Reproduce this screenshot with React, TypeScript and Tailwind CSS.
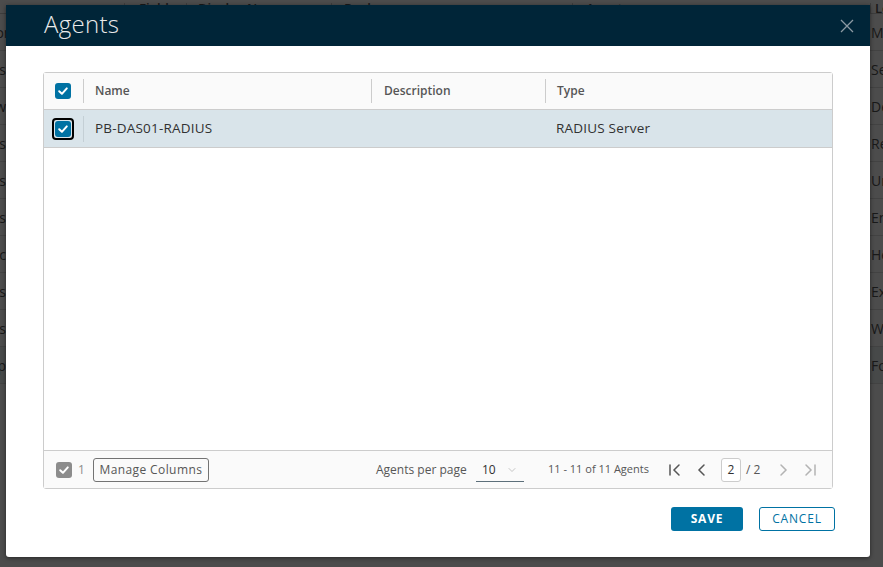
import { ChevronDown } from "lucide-react";

const font = { fontFamily: '"Open Sans", "Liberation Sans", sans-serif' };

const bgRows = [
  ["Permissions", "Manager"],
  ["Groups", "Server"],
  ["Review", "Default"],
  ["Users", "Realm"],
  ["Tokens", "Unix"],
  ["Policies", "Enrollment"],
  ["Logic", "Helpdesk"],
  ["Devices", "External"],
  ["Clients", "Web"],
  ["Map", "Forms"],
];

function Check({ className = "" }: { className?: string }) {
  return (
    <svg viewBox="0 0 16 16" className={className} fill="none">
      <path
        d="M4.2 8.3 L6.9 10.8 L11.8 5.4"
        stroke="white"
        strokeWidth="2"
        strokeLinecap="round"
        strokeLinejoin="round"
      />
    </svg>
  );
}

function Checkbox({ focused = false }: { focused?: boolean }) {
  const box = (
    <span className="flex h-4 w-4 items-center justify-center rounded-[3px] bg-[#0072a3]">
      <Check className="h-4 w-4" />
    </span>
  );
  if (!focused) return box;
  return (
    <span className="flex h-[22px] w-[22px] items-center justify-center rounded-[4px] border-2 border-black">
      {box}
    </span>
  );
}

// The dimmed page behind the dialog.
function BackgroundPage() {
  return (
    <div className="h-[567px] w-[883px] overflow-hidden bg-white text-[14px] text-[#565656]">
      <div className="flex h-[14px] items-end overflow-hidden border-b border-[#ccc] text-[13px] font-semibold leading-[10px] whitespace-nowrap">
        <div className="w-[124px] shrink-0" />
        <div className="w-[62px] shrink-0 border-l border-[#ccc] pl-[14px]">Field</div>
        <div className="w-[145px] shrink-0 border-l border-[#ccc] pl-[11px]">Display Name</div>
        <div className="w-[241px] shrink-0 border-l border-[#ccc] pl-[12px]">Realm</div>
        <div className="w-[298px] shrink-0 border-l border-[#ccc] pl-[13px]">Agents</div>
        <div className="shrink-0 border-l border-[#ccc] pl-[4px]">Location</div>
      </div>
      {bgRows.map(([left, right], i) => (
        <div
          key={left}
          className={`flex h-[37px] items-center border-b border-[#ddd] whitespace-nowrap ${i === 9 ? "bg-[#eef3f6]" : ""}`}
        >
          <div className="w-[870px] shrink-0 overflow-hidden">
            <span className="-ml-[60px] block w-[66px] text-right">{left}</span>
          </div>
          <div className="shrink-0 pl-[1px]">{right}</div>
        </div>
      ))}
    </div>
  );
}

function FirstIcon({ className = "" }: { className?: string }) {
  return (
    <svg viewBox="0 0 14 14" className={className} fill="none" stroke="currentColor" strokeWidth="1.5" strokeLinecap="round">
      <path d="M2 2 V12" />
      <path d="M11 2 L6 7 L11 12" />
    </svg>
  );
}

function LastIcon({ className = "" }: { className?: string }) {
  return (
    <svg viewBox="0 0 14 14" className={className} fill="none" stroke="currentColor" strokeWidth="1.5" strokeLinecap="round">
      <path d="M12 2 V12" />
      <path d="M3 2 L8 7 L3 12" />
    </svg>
  );
}

function PrevIcon({ className = "" }: { className?: string }) {
  return (
    <svg viewBox="0 0 14 14" className={className} fill="none" stroke="currentColor" strokeWidth="1.5" strokeLinecap="round">
      <path d="M9 2 L4 7 L9 12" />
    </svg>
  );
}

function NextIcon({ className = "" }: { className?: string }) {
  return (
    <svg viewBox="0 0 14 14" className={className} fill="none" stroke="currentColor" strokeWidth="1.5" strokeLinecap="round">
      <path d="M5 2 L10 7 L5 12" />
    </svg>
  );
}

function AgentsDialog() {
  return (
    <div className="absolute left-[6px] top-[5px] flex h-[552px] w-[864px] flex-col rounded-b-[3px] bg-white shadow-[0_1px_4px_rgba(0,0,0,0.5)]">
      <div className="flex h-[41px] items-center justify-between bg-[#002538] pl-[38px] pr-[15px]">
        <h3 className="pb-[4px] text-[24px] font-light tracking-[0.3px] text-[#eaeaea]">Agents</h3>
        <svg viewBox="0 0 16 16" className="h-[16px] w-[16px] text-[#8c9aa3]" fill="none" stroke="currentColor" strokeWidth="1.3">
          <path d="M2 2 L14 14 M14 2 L2 14" />
        </svg>
      </div>

      <div className="flex flex-1 flex-col px-[37px] pt-[26px]">
        {/* datagrid */}
        <div className="flex h-[417px] w-[790px] flex-col rounded-[3px] border border-[#ccc]">
          <div className="flex h-[37px] shrink-0 items-center border-b border-[#ccc] bg-[#fafafa] text-[12px] font-semibold text-[#565656]">
            <div className="flex w-[39px] items-center pl-[11px]">
              <Checkbox />
            </div>
            <div className="flex h-[24px] w-[288px] items-center border-l border-[#ccc] pl-[11px]">Name</div>
            <div className="flex h-[24px] w-[174px] items-center border-l border-[#ccc] pl-[12px]">Description</div>
            <div className="flex h-[24px] flex-1 items-center border-l border-[#ccc] pl-[11px]">Type</div>
          </div>

          <div className="flex h-[38px] shrink-0 items-center border-b border-[#ccc] bg-[#d9e4ea] text-[13.5px] tracking-[0.2px] text-[#313131]">
            <div className="flex w-[39px] items-center pl-[8px]">
              <Checkbox focused />
            </div>
            <div className="flex h-[26px] w-[288px] items-center border-l border-[#c4cfd5] pl-[11px]">PB-DAS01-RADIUS</div>
            <div className="w-[174px]" />
            <div className="flex-1 pl-[11px]">RADIUS Server</div>
          </div>

          <div className="flex-1" />

          <div className="flex h-[38px] shrink-0 items-center border-t border-[#ccc] bg-[#fafafa] text-[12px] whitespace-nowrap text-[#565656]">
            <div className="flex w-[332px] shrink-0 items-center">
              <span className="ml-[12px] flex h-4 w-4 items-center justify-center rounded-[3px] bg-[#8c8c8c]">
                <Check className="h-4 w-4" />
              </span>
              <span className="ml-[6px] text-[#8c8c8c]">1</span>
              <button className="ml-[8px] flex h-[24px] w-[116px] items-center justify-center rounded-[3px] border border-[#737373] text-[12px] tracking-[0.4px] text-[#565656]">
                Manage Columns
              </button>
            </div>
            <div className="flex w-[100px] shrink-0 items-center">Agents per page</div>
            <div className="flex h-[24px] w-[48px] shrink-0 items-center justify-between border-b border-[#5c6f7a] pl-[6px] pr-[6px] pt-[2px]">
              <span className="text-[#313131]">10</span>
              <ChevronDown className="h-[12px] w-[12px] text-[#b3b3b3]" strokeWidth={1.5} />
            </div>
            <div className="ml-[24px] w-[120px] shrink-0 text-[11px]">11 - 11 of 11 Agents</div>
            <FirstIcon className="h-[14px] w-[14px] shrink-0 text-[#565656]" />
            <PrevIcon className="ml-[13px] h-[14px] w-[14px] shrink-0 text-[#565656]" />
            <span className="ml-[12px] flex h-[24px] w-[20px] shrink-0 items-center justify-center rounded-[3px] border border-[#ccc] bg-white text-[#313131]">
              2
            </span>
            <span className="ml-[5px] shrink-0">/ 2</span>
            <NextIcon className="ml-[16px] h-[14px] w-[14px] shrink-0 text-[#b3b3b3]" />
            <LastIcon className="ml-[13px] h-[14px] w-[14px] shrink-0 text-[#b3b3b3]" />
          </div>
        </div>

        <div className="mt-[18px] flex justify-end gap-[16px]">
          <button className="h-[24px] w-[72px] rounded-[3px] bg-[#0072a3] text-[12px] font-bold tracking-[0.8px] text-white">
            SAVE
          </button>
          <button className="-mr-[2px] h-[24px] w-[76px] rounded-[3px] border border-[#0072a3] bg-white text-[12px] tracking-[0.8px] text-[#0072a3]">
            CANCEL
          </button>
        </div>
      </div>
    </div>
  );
}

export default function App() {
  return (
    <div className="relative h-[567px] w-[883px] overflow-hidden" style={font}>
      <BackgroundPage />
      <div className="absolute inset-0 bg-black/70" />
      <AgentsDialog />
    </div>
  );
}
